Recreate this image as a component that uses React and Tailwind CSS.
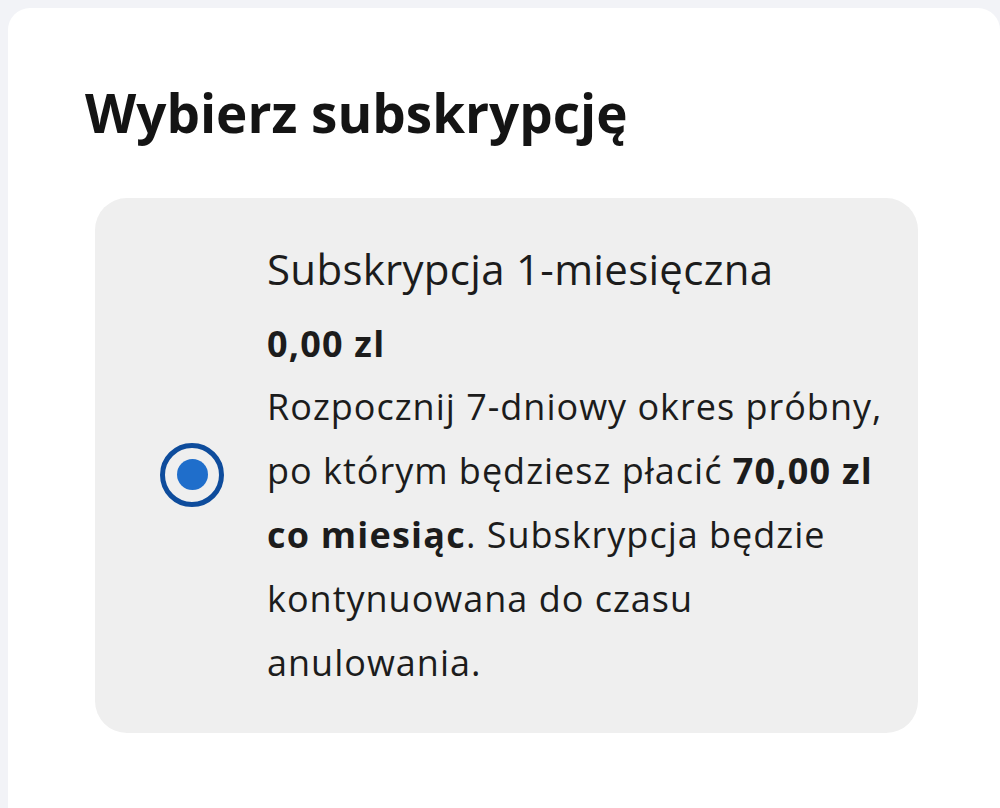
export default function App() {
  return (
    <div className="w-[1000px] h-[808px] overflow-hidden bg-[#f2f3f7] pt-2 pl-2" style={{ fontFamily: '"Open Sans", "Noto Sans", sans-serif' }}>
      <div className="h-[820px] bg-white rounded-tl-[22px] rounded-tr-[22px] pl-[77px] pt-[78px] text-[#141414]">
        <h1 className="text-[53px] leading-[53px] font-bold tracking-[0px]">Wybierz subskrypcję</h1>
        <div className="mt-[59px] ml-[10px] w-[823px] bg-[#efefef] rounded-[32px] flex pl-[65px] pr-[30px] pt-[43px] pb-[38px]">
          <div className="self-center mt-[13px] w-[64px] h-[64px] shrink-0 rounded-full border-[5px] border-[#0e4c9c] flex items-center justify-center">
            <div className="w-[31px] h-[31px] rounded-full bg-[#1f6ecb]" />
          </div>
          <div className="ml-[43px] text-[36px] leading-[64px] tracking-[1px] text-[#1c1c1c] whitespace-nowrap">
            <div className="text-[42px] leading-[56px] tracking-[0.3px]">Subskrypcja 1-miesięczna</div>
            <div className="font-bold mt-[16px] leading-[62px] tracking-[1.2px]">0,00 zl</div>
            <div>
              Rozpocznij 7-dniowy okres próbny,<br />
              po którym będziesz płacić <b className="tracking-[1.2px]">70,00 zl</b><br />
              <b className="tracking-[1.2px]">co miesiąc</b>. Subskrypcja będzie<br />
              kontynuowana do czasu<br />
              anulowania.
            </div>
          </div>
        </div>
      </div>
    </div>
  );
}
